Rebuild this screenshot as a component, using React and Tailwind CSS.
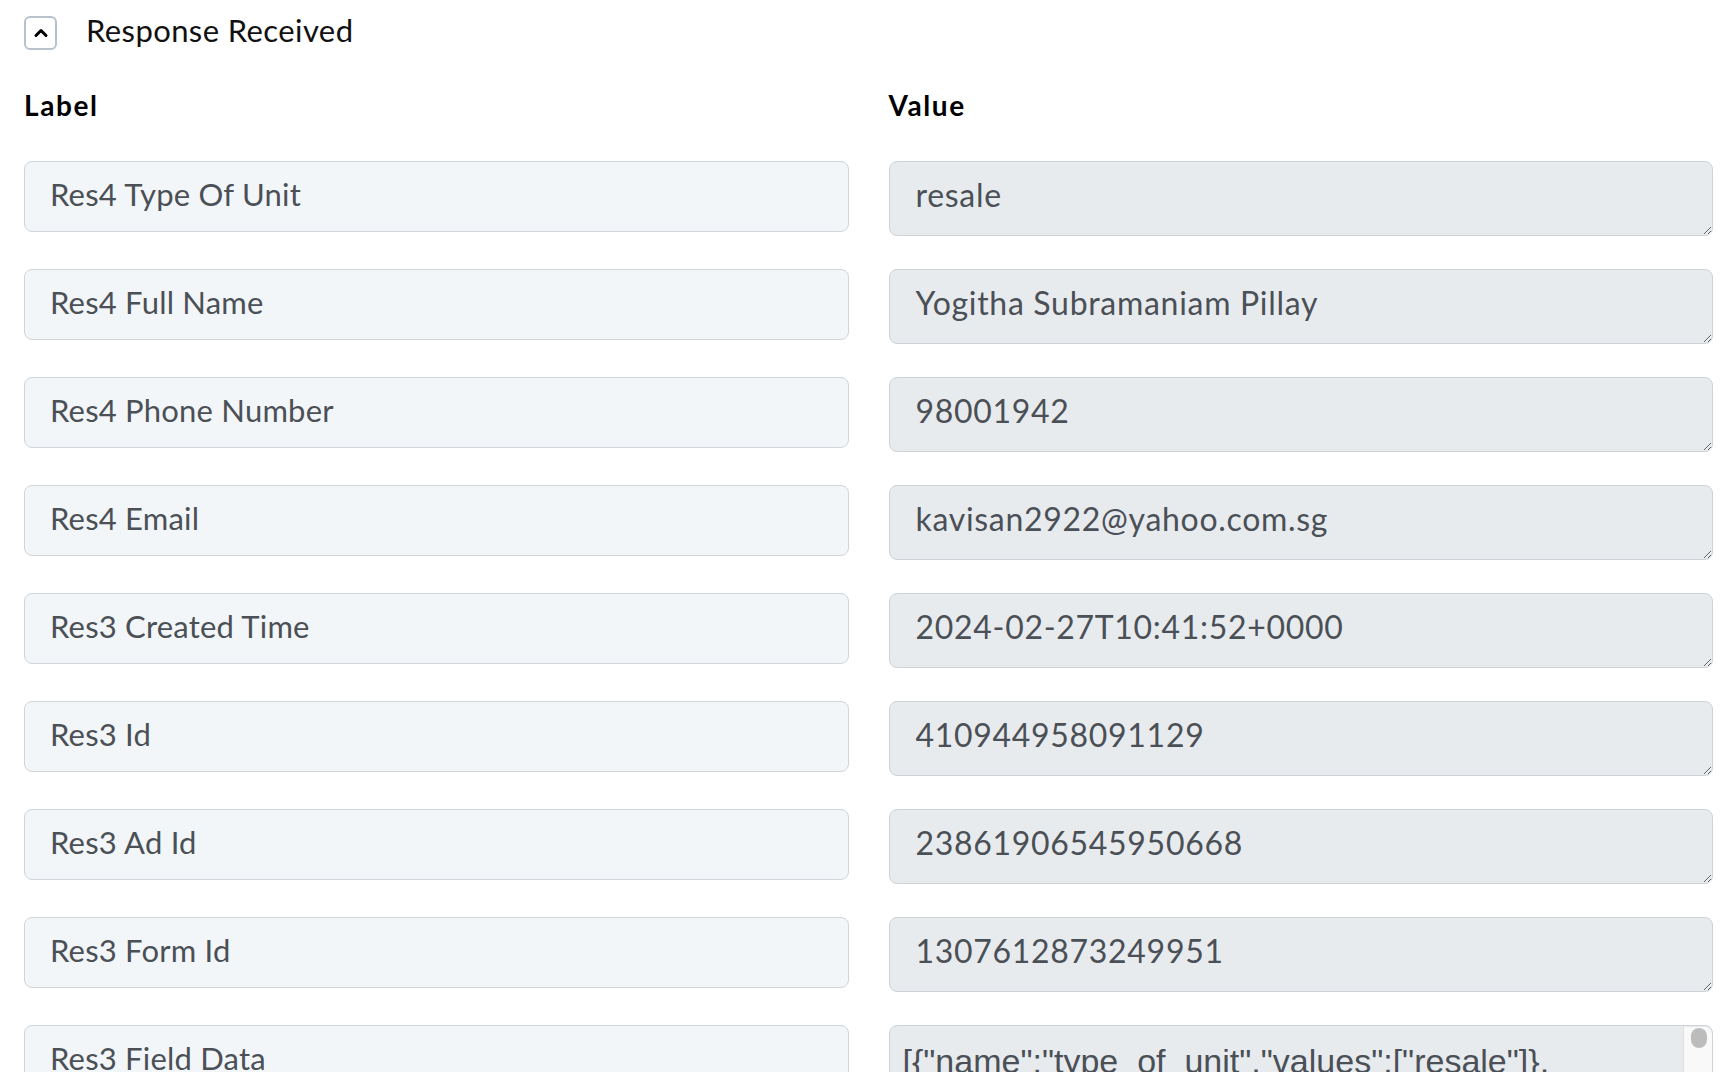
import { useState } from "react";

const rows = [
  { label: "Res4 Type Of Unit", value: "resale" },
  { label: "Res4 Full Name", value: "Yogitha Subramaniam Pillay" },
  { label: "Res4 Phone Number", value: "98001942" },
  { label: "Res4 Email", value: "kavisan2922@yahoo.com.sg" },
  { label: "Res3 Created Time", value: "2024-02-27T10:41:52+0000" },
  { label: "Res3 Id", value: "410944958091129" },
  { label: "Res3 Ad Id", value: "23861906545950668" },
  { label: "Res3 Form Id", value: "1307612873249951" },
];

const fieldData =
  '[{"name":"type_of_unit","values":["resale"]},{"name":"full_name","values":["Yogitha Subramaniam Pillay"]},{"name":"phone_number","values":["98001942"]},{"name":"email","values":["kavisan2922@yahoo.com.sg"]},{"name":"created_time","values":["2024-02-27T10:41:52+0000"]},{"name":"ad_id","values":["23861906545950668"]},{"name":"form_id","values":["1307612873249951"]}]';

function ChevronUp() {
  return (
    <svg width="20" height="20" viewBox="0 0 24 24" fill="none" stroke="currentColor" strokeWidth="3.6" strokeLinecap="round" strokeLinejoin="round">
      <path d="M6 15l6-6 6 6" />
    </svg>
  );
}

function App() {
  const [open, setOpen] = useState(true);

  return (
    <div className="h-[1072px] overflow-hidden bg-white pl-6 pr-[11px] font-['Lato',sans-serif]">

      {/* HEADER */}
      <div className="flex items-center h-[64px] pt-px">
        <button
          onClick={() => setOpen(!open)}
          className="w-[33px] h-[34px] flex items-center justify-center rounded-[6px] border-2 border-[#b9c2cc] text-black"
        >
          <ChevronUp />
        </button>
        <span className="ml-[29px] pb-[5px] text-[31px] text-[#111] tracking-[0.4px]">
          Response Received
        </span>
      </div>

      {/* COLUMN TITLES */}
      <div className="grid grid-cols-2 gap-x-[40px] mt-[20px] h-[77px]">
        <div className="text-[28px] font-bold text-black tracking-[1.6px]">Label</div>
        <div className="text-[28px] font-bold text-black tracking-[1.6px]">Value</div>
      </div>

      {/* FIELDS */}
      {open && (
        <div className="grid grid-cols-2 gap-x-[40px] gap-y-[33px] items-start">
          {rows.map((row) => (
            <FieldRow key={row.label} label={row.label} value={row.value} />
          ))}

          <input
            readOnly
            value="Res3 Field Data"
            className="h-[71px] w-full rounded-[8px] border-[1.5px] border-[#cfd5db] bg-[#f3f6f9] px-[25px] pb-[6px] text-[31px] tracking-[0.2px] text-[#4a5056] outline-none"
          />

          {/* long json value, scrollable */}
          <div className="relative">
            <textarea
              readOnly
              value={fieldData}
              className="block h-[260px] w-full rounded-[8px] border-[1.5px] border-[#cdd3d8] bg-[#e8ebee] pl-[13px] pr-[38px] pt-[12px] text-[34px] leading-[1.4] text-[#4a5056] outline-none font-['Liberation_Sans',sans-serif] overflow-hidden"
            />
            <div className="absolute right-[1.5px] top-[1.5px] bottom-[1.5px] w-[29px] rounded-tr-[7px] border-l border-[#dedede] bg-[#f9f9f9]">
              <div className="ml-[7px] mt-[1px] h-[20px] w-[16px] rounded-full bg-[#bcbcbc]" />
            </div>
          </div>
        </div>
      )}

    </div>
  );
}

function FieldRow({ label, value }) {
  return (
    <>
      <input
        readOnly
        value={label}
        className="h-[71px] w-full rounded-[8px] border-[1.5px] border-[#cfd5db] bg-[#f3f6f9] px-[25px] pb-[6px] text-[31px] tracking-[0.2px] text-[#4a5056] outline-none"
      />
      <textarea
        readOnly
        rows={1}
        value={value}
        className="h-[75px] w-full rounded-[8px] border-[1.5px] border-[#cdd3d8] bg-[#e8ebee] px-[26px] pt-[11px] text-[32px] leading-[1.4] tracking-[0.7px] text-[#4a5056] outline-none"
      />
    </>
  );
}

export default App;
